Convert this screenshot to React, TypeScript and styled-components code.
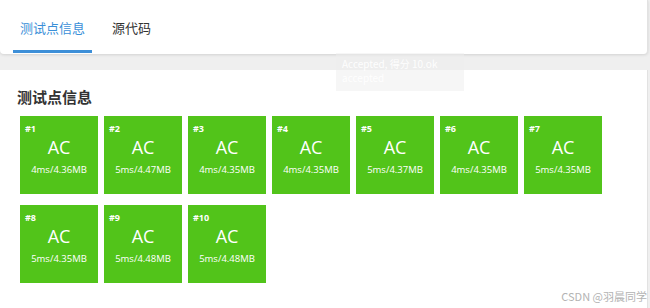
import React from "react";
import styled, { createGlobalStyle } from "styled-components";

const Global = createGlobalStyle`
  html, body { margin: 0; padding: 0; background: #efefef; }
  body { font-family: "Open Sans", "Noto Sans CJK SC", sans-serif; width: 650px; height: 308px; overflow: hidden; }
`;

const Page = styled.div`
  position: relative;
  width: 650px;
  height: 308px;
  display: flex;
  flex-direction: column;
  background: #efefef;
`;

const TabCard = styled.div`
  height: 54px;
  width: 648px;
  background: #fff;
  border-radius: 0 0 4px 4px;
  box-shadow: 0 1px 3px rgba(0, 0, 0, 0.12);
  border-right: 1px solid #e2e2e2;
  display: flex;
  align-items: stretch;
  padding-left: 13px;
  box-sizing: border-box;
  gap: 20px;
`;

const Tab = styled.div<{ $active?: boolean }>`
  display: flex;
  align-items: center;
  justify-content: center;
  white-space: nowrap;
  width: ${(p) => (p.$active ? "79px" : "auto")};
  box-sizing: border-box;
  font-family: "Noto Sans CJK SC", sans-serif;
  font-size: 13px;
  color: ${(p) => (p.$active ? "#3a8fd8" : "#333")};
  border-bottom: 3px solid ${(p) => (p.$active ? "#3d8fd8" : "transparent")};
  padding-top: 4px;
  margin-bottom: 1px;
`;

const Gap = styled.div`
  height: 16px;
`;

const Card = styled.div`
  flex: 1;
  width: 648px;
  background: #fff;
  border-right: 1px solid #e2e2e2;
  box-sizing: border-box;
  padding: 17px 0 0 17px;
`;

const Title = styled.div`
  font-family: "Noto Sans CJK SC", sans-serif;
  font-weight: 700;
  font-size: 15px;
  line-height: 20px;
  color: #333;
  margin-bottom: 9px;
`;

const Grid = styled.div`
  display: grid;
  grid-template-columns: repeat(7, 78px);
  column-gap: 6px;
  row-gap: 11px;
  padding-left: 3px;
`;

const Box = styled.div`
  width: 78px;
  height: 78px;
  background: #52c41a;
  color: #fff;
  display: flex;
  flex-direction: column;
  align-items: center;
`;

const Num = styled.div`
  align-self: flex-start;
  font-size: 9px;
  font-weight: 700;
  margin: 7px 0 0 5px;
  line-height: 11px;
`;

const Result = styled.div`
  font-size: 18px;
  line-height: 24px;
  margin-top: 1px;
`;

const Stat = styled.div`
  font-size: 9.5px;
  line-height: 14px;
  margin-top: 4px;
  font-weight: 500;
`;

const Ghost = styled.div`
  position: absolute;
  left: 336px;
  top: 53px;
  width: 128px;
  height: 38px;
  background: rgba(238, 238, 238, 0.5);
  color: rgba(255, 255, 255, 0.95);
  font-size: 10px;
  line-height: 14px;
  padding: 4px 6px;
  box-sizing: border-box;
  font-family: "Noto Sans CJK SC", sans-serif;
`;

const Watermark = styled.div`
  position: absolute;
  right: 3px;
  bottom: 4px;
  font-family: "Noto Sans CJK SC", sans-serif;
  font-size: 11px;
  color: #b3b3b3;
`;

const data = [
  "4ms/4.36MB",
  "5ms/4.47MB",
  "4ms/4.35MB",
  "4ms/4.35MB",
  "5ms/4.37MB",
  "4ms/4.35MB",
  "5ms/4.35MB",
  "5ms/4.35MB",
  "5ms/4.48MB",
  "5ms/4.48MB",
];

export default function App() {
  return (
    <Page>
      <Global />
      <TabCard>
        <Tab $active>测试点信息</Tab>
        <Tab>源代码</Tab>
      </TabCard>
      <Gap />
      <Card>
        <Title>测试点信息</Title>
        <Grid>
          {data.map((d, i) => (
            <Box key={i}>
              <Num>#{i + 1}</Num>
              <Result>AC</Result>
              <Stat>{d}</Stat>
            </Box>
          ))}
        </Grid>
      </Card>
      <Ghost>
        <div>Accepted, 得分 10.ok</div>
        <div>accepted</div>
      </Ghost>
      <Watermark>CSDN @羽晨同学</Watermark>
    </Page>
  );
}
